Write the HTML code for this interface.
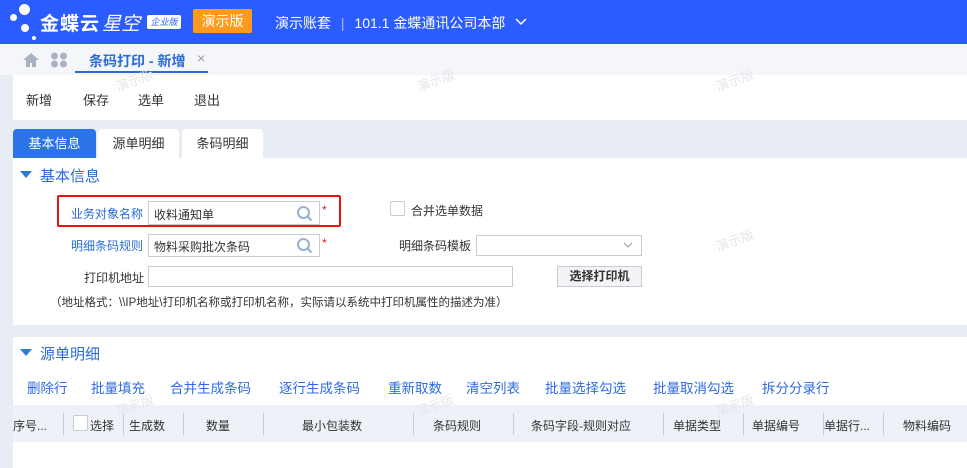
<!DOCTYPE html>
<html><head><meta charset="utf-8"><style>
*{margin:0;padding:0;box-sizing:border-box}
body{width:967px;height:468px;overflow:hidden;background:#e8ecf4;font-family:"Liberation Sans","Noto Sans CJK SC",sans-serif;font-size:13px;color:#333;position:relative}
.abs{position:absolute}
.hdr{left:0;top:0;width:967px;height:44px;background:#2a5cff;color:#fff}
.tabbar{left:0;top:44px;width:967px;height:31px;background:#f4f6fa}
.tool{left:13px;top:75px;width:954px;height:45px;background:#fff}
.panel{background:#fff}
.inp{border:1px solid #c8ccd4;background:#fff;height:22px}
.lbl{font-size:12px}
.blue{color:#2a6bd8}
.wm{color:#e4e6ea;font-size:13px;transform:rotate(-20deg)}
.th{top:405px;height:37px;background:#eef1f7;left:13px;width:954px}
.col{position:absolute;top:12px;font-size:12px;color:#333}
.sep{position:absolute;top:8px;width:1px;height:22px;background:#c8ccd4}
.act{position:absolute;top:40px;font-size:13.5px;color:#2e6be0}
</style></head><body>
<div class="abs hdr">
  <div class="abs" style="left:19px;top:4px;width:11px;height:11px;border-radius:50%;background:#fff"></div>
  <div class="abs" style="left:10px;top:14px;width:7px;height:7px;border-radius:50%;background:#fff"></div>
  <div class="abs" style="left:21px;top:24px;width:8px;height:8px;border-radius:50%;background:#fff"></div>
  <div class="abs" style="left:32px;top:36px;width:4px;height:4px;border-radius:50%;background:#fff"></div>
  <div class="abs" style="left:40px;top:9px;font-size:19px;font-weight:bold;letter-spacing:1px">金蝶云</div>
  <div class="abs" style="left:102px;top:9px;font-size:19px;font-style:italic">星空</div>
  <div class="abs" style="left:147px;top:15px;width:34px;height:14px;border:1px solid #fff;border-radius:2px;background:#fff;color:#2a5cff;font-size:9px;text-align:center;line-height:12px;font-style:italic">企业版</div>
  <div class="abs" style="left:193px;top:9px;width:59px;height:24px;background:#ff9a1f;border-radius:2px;font-size:14px;text-align:center;line-height:24px">演示版</div>
  <div class="abs" style="left:275px;top:13px;font-size:14px">演示账套 <span style="opacity:.6;margin:0 6px">|</span> 101.1 金蝶通讯公司本部</div>
  <svg class="abs" style="left:515px;top:18px" width="12" height="8"><path d="M1 1l5 5 5-5" stroke="#fff" stroke-width="1.5" fill="none"/></svg>
</div>
<div class="abs tabbar">
  <svg class="abs" style="left:22px;top:8px" width="18" height="16"><path d="M9 1L1 8h3v7h4v-4h2v4h4V8h3z" fill="#a9b1c2"/></svg>
  <svg class="abs" style="left:50px;top:8px" width="18" height="16"><circle cx="4.5" cy="4" r="3.5" fill="#a9b1c2"/><circle cx="13.5" cy="4" r="3.5" fill="#a9b1c2"/><circle cx="4.5" cy="12" r="3.5" fill="#a9b1c2"/><circle cx="13.5" cy="12" r="3.5" fill="#a9b1c2"/></svg>
  <div class="abs" style="left:89px;top:7px;font-size:14px;color:#2a6bd8;font-weight:bold">条码打印 - 新增</div>
  <div class="abs" style="left:197px;top:6px;font-size:14px;color:#999">×</div>
  <div class="abs" style="left:75px;top:27px;width:133px;height:2px;background:#2a6bd8"></div>
</div>
<div class="abs tool">
  <div class="abs" style="left:13px;top:15px;font-size:13px">新增</div>
  <div class="abs" style="left:70px;top:15px;font-size:13px">保存</div>
  <div class="abs" style="left:125px;top:15px;font-size:13px">选单</div>
  <div class="abs" style="left:181px;top:15px;font-size:13px">退出</div>
</div>
<div class="abs" style="left:13px;top:129px;width:83px;height:29px;background:#2a74e8;color:#fff;border-radius:4px 4px 0 0;text-align:center;line-height:29px;font-size:13px">基本信息</div>
<div class="abs" style="left:98px;top:129px;width:81px;height:29px;background:#fff;border-radius:4px 4px 0 0;text-align:center;line-height:29px;font-size:13px">源单明细</div>
<div class="abs" style="left:182px;top:129px;width:81px;height:29px;background:#fff;border-radius:4px 4px 0 0;text-align:center;line-height:29px;font-size:13px">条码明细</div>
<div class="abs panel" style="left:13px;top:158px;width:954px;height:167px">
  <svg class="abs" style="left:7px;top:13px" width="12" height="8"><path d="M0 0h12L6 7z" fill="#2a7bd4"/></svg>
  <div class="abs blue" style="left:27px;top:7px;font-size:15px">基本信息</div>
</div>
<div class="abs" style="left:57px;top:195px;width:284px;height:32px;border:2px solid #f01010;border-radius:2px"></div>
<div class="abs lbl blue" style="left:71px;top:205px">业务对象名称</div>
<div class="abs inp" style="left:148px;top:201px;width:172px;height:24px"><span class="abs" style="left:5px;top:4px;font-size:12px">收料通知单</span>
<svg class="abs" style="left:147px;top:3px" width="17" height="17"><circle cx="7.5" cy="7.5" r="5.5" stroke="#9ab0cc" stroke-width="2" fill="none"/><path d="M11.5 11.5l4 4" stroke="#9ab0cc" stroke-width="2"/></svg></div>
<div class="abs" style="left:322px;top:203px;color:#e02020;font-size:12px">*</div>
<div class="abs" style="left:390px;top:201px;width:15px;height:15px;border:1px solid #c8ccd4;border-radius:2px;background:#fff"></div>
<div class="abs lbl" style="left:411px;top:202px">合并选单数据</div>
<div class="abs lbl blue" style="left:71px;top:237px">明细条码规则</div>
<div class="abs inp" style="left:148px;top:234px;width:172px;height:23px"><span class="abs" style="left:5px;top:3px;font-size:12px">物料采购批次条码</span>
<svg class="abs" style="left:147px;top:2px" width="17" height="17"><circle cx="7.5" cy="7.5" r="5.5" stroke="#9ab0cc" stroke-width="2" fill="none"/><path d="M11.5 11.5l4 4" stroke="#9ab0cc" stroke-width="2"/></svg></div>
<div class="abs" style="left:322px;top:236px;color:#e02020;font-size:12px">*</div>
<div class="abs lbl" style="left:399px;top:237px">明细条码模板</div>
<div class="abs inp" style="left:476px;top:235px;width:166px;height:21px"><svg class="abs" style="left:146px;top:6px" width="10" height="7"><path d="M1 1l4 4 4-4" stroke="#999" fill="none"/></svg></div>
<div class="abs lbl" style="left:84px;top:269px">打印机地址</div>
<div class="abs inp" style="left:148px;top:266px;width:365px;height:21px"></div>
<div class="abs" style="left:557px;top:266px;width:85px;height:21px;border:1px solid #c8ccd4;background:#f2f3f5;font-size:12px;font-weight:bold;text-align:center;line-height:19px">选择打印机</div>
<div class="abs" style="left:50px;top:294px;font-size:11.5px">（地址格式：\\IP地址\打印机名称或打印机名称，实际请以系统中打印机属性的描述为准）</div>
<div class="abs panel" style="left:13px;top:337px;width:954px;height:131px">
  <svg class="abs" style="left:7px;top:12px" width="12" height="8"><path d="M0 0h12L6 7z" fill="#2a7bd4"/></svg>
  <div class="abs blue" style="left:27px;top:6px;font-size:15px">源单明细</div>
  <span class="act" style="left:14px">删除行</span>
  <span class="act" style="left:78px">批量填充</span>
  <span class="act" style="left:157px">合并生成条码</span>
  <span class="act" style="left:266px">逐行生成条码</span>
  <span class="act" style="left:375px">重新取数</span>
  <span class="act" style="left:453px">清空列表</span>
  <span class="act" style="left:532px">批量选择勾选</span>
  <span class="act" style="left:640px">批量取消勾选</span>
  <span class="act" style="left:749px">拆分分录行</span>
</div>
<div class="abs th">
  <span class="col" style="left:0">序号...</span><span class="sep" style="left:50px"></span>
  <span class="abs" style="left:60px;top:10px;width:15px;height:16px;border:1px solid #c8ccd4;border-radius:2px;background:#fff"></span><span class="col" style="left:77px">选择</span><span class="sep" style="left:110px"></span>
  <span class="col" style="left:116px">生成数</span><span class="sep" style="left:170px"></span>
  <span class="col" style="left:193px">数量</span><span class="sep" style="left:250px"></span>
  <span class="col" style="left:289px">最小包装数</span><span class="sep" style="left:400px"></span>
  <span class="col" style="left:420px">条码规则</span><span class="sep" style="left:500px"></span>
  <span class="col" style="left:518px">条码字段-规则对应</span><span class="sep" style="left:650px"></span>
  <span class="col" style="left:660px">单据类型</span><span class="sep" style="left:730px"></span>
  <span class="col" style="left:739px">单据编号</span><span class="sep" style="left:810px"></span>
  <span class="col" style="left:811px">单据行...</span><span class="sep" style="left:870px"></span>
  <span class="col" style="left:890px">物料编码</span>
</div>
<div class="abs wm" style="left:115px;top:70px">演示版</div>
<div class="abs wm" style="left:416px;top:70px">演示版</div>
<div class="abs wm" style="left:715px;top:70px">演示版</div>
<div class="abs wm" style="left:715px;top:230px">演示版</div>
<div class="abs wm" style="left:115px;top:395px">演示版</div>
<div class="abs wm" style="left:415px;top:395px">演示版</div>
<div class="abs wm" style="left:715px;top:395px">演示版</div>
</body></html>
